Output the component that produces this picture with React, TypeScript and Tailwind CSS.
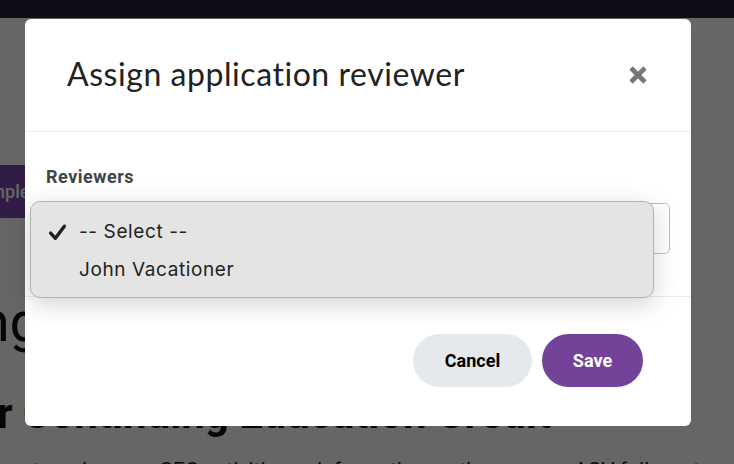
import React from "react";

const CloseIcon = () => (
  <svg width="20" height="20" viewBox="0 0 20 20" fill="none">
    <path d="M3 3L17 17M17 3L3 17" stroke="#777777" strokeWidth="4.6" strokeLinecap="butt" />
  </svg>
);

const CheckIcon = () => (
  <svg width="19" height="19" viewBox="0 0 18 18" fill="none">
    <path d="M2.5 9.5L7 14.5L15.5 3" stroke="#1f1f1f" strokeWidth="3.2" strokeLinecap="round" strokeLinejoin="round" />
  </svg>
);

const App = () => {
  const reviewers = [
    { id: "select", name: "-- Select --", selected: true },
    { id: "john", name: "John Vacationer", selected: false },
  ];

  return (
    <div className="relative w-[734px] h-[464px] overflow-hidden bg-white font-['Roboto',sans-serif]">
      {/* page behind the modal */}
      <div className="h-[18px] bg-[#2a1e3c]" />
      <div className="pt-[147px]">
        <div className="flex justify-end w-[69px] overflow-hidden">
          <button className="shrink-0 h-[53px] px-6 bg-[#7a46ad] text-white text-[18px] font-medium rounded-md whitespace-nowrap">
            Complete
          </button>
        </div>
        <div className="flex justify-end w-[41px] mt-[72px]">
          <h1 className="shrink-0 text-[56px] leading-[64px] text-[#111] whitespace-nowrap">Tracking</h1>
        </div>
        <h2 className="ml-[-159px] mt-[35px] text-[42px] leading-[50px] font-bold text-[#111] whitespace-nowrap">
          Apply for Continuing Education Credit
        </h2>
        <p className="ml-[-18px] mt-[17px] text-[21px] leading-7 text-[#222] whitespace-nowrap">
          To categorize your CEC activities or information on the process ACV follows to
        </p>
      </div>

      {/* overlay */}
      <div className="absolute inset-0 bg-black/60 pt-[19px] pl-[25px]">
        <div className="w-[666px] h-[407px] bg-white rounded-[6px] flex flex-col">
          <div className="h-[113px] flex items-center justify-between pl-[42px] pr-[43px] border-b border-[#ebeef0]">
            <h3 className="font-['Lato',sans-serif] text-[32px] tracking-[0.55px] text-[#222] pb-[2px]">
              Assign application reviewer
            </h3>
            <button className="w-5 h-5 flex items-center justify-center">
              <CloseIcon />
            </button>
          </div>

          <div className="h-[165px] px-[21px] pt-[35px] border-b border-[#ebeef0]">
            <label className="block text-[18px] leading-5 tracking-[0.5px] font-bold text-[#444]">Reviewers</label>
            <div className="relative mt-[16px]">
              <div className="h-[51px] rounded-[5px] border-[1.5px] border-[#cbb2df] bg-white" />
              <div className="absolute left-[-16px] top-[-2px] w-[624px] h-[97px] rounded-[10px] border border-[#b3b3b3] bg-[#e3e4e3] shadow-[0_6px_24px_rgba(0,0,0,0.18)] pt-[11px] font-['Inter',sans-serif]">
                {reviewers.map((r) => (
                  <div key={r.id} className="flex items-center h-[38px] pl-[17px]">
                    <span className="w-[31px] flex">{r.selected && <CheckIcon />}</span>
                    <span className="text-[19px] tracking-[0.6px] text-[#222]">{r.name}</span>
                  </div>
                ))}
              </div>
            </div>
          </div>

          <div className="flex-1 flex items-start justify-end gap-[10px] pt-[37px] pr-[48px]">
            <button className="h-[53px] w-[119px] rounded-full bg-[#e6e9ec] text-[18px] font-bold text-black">
              Cancel
            </button>
            <button className="h-[53px] w-[101px] rounded-full bg-[#744399] text-[18px] font-bold text-white">
              Save
            </button>
          </div>
        </div>
      </div>
    </div>
  );
};

export default App;
